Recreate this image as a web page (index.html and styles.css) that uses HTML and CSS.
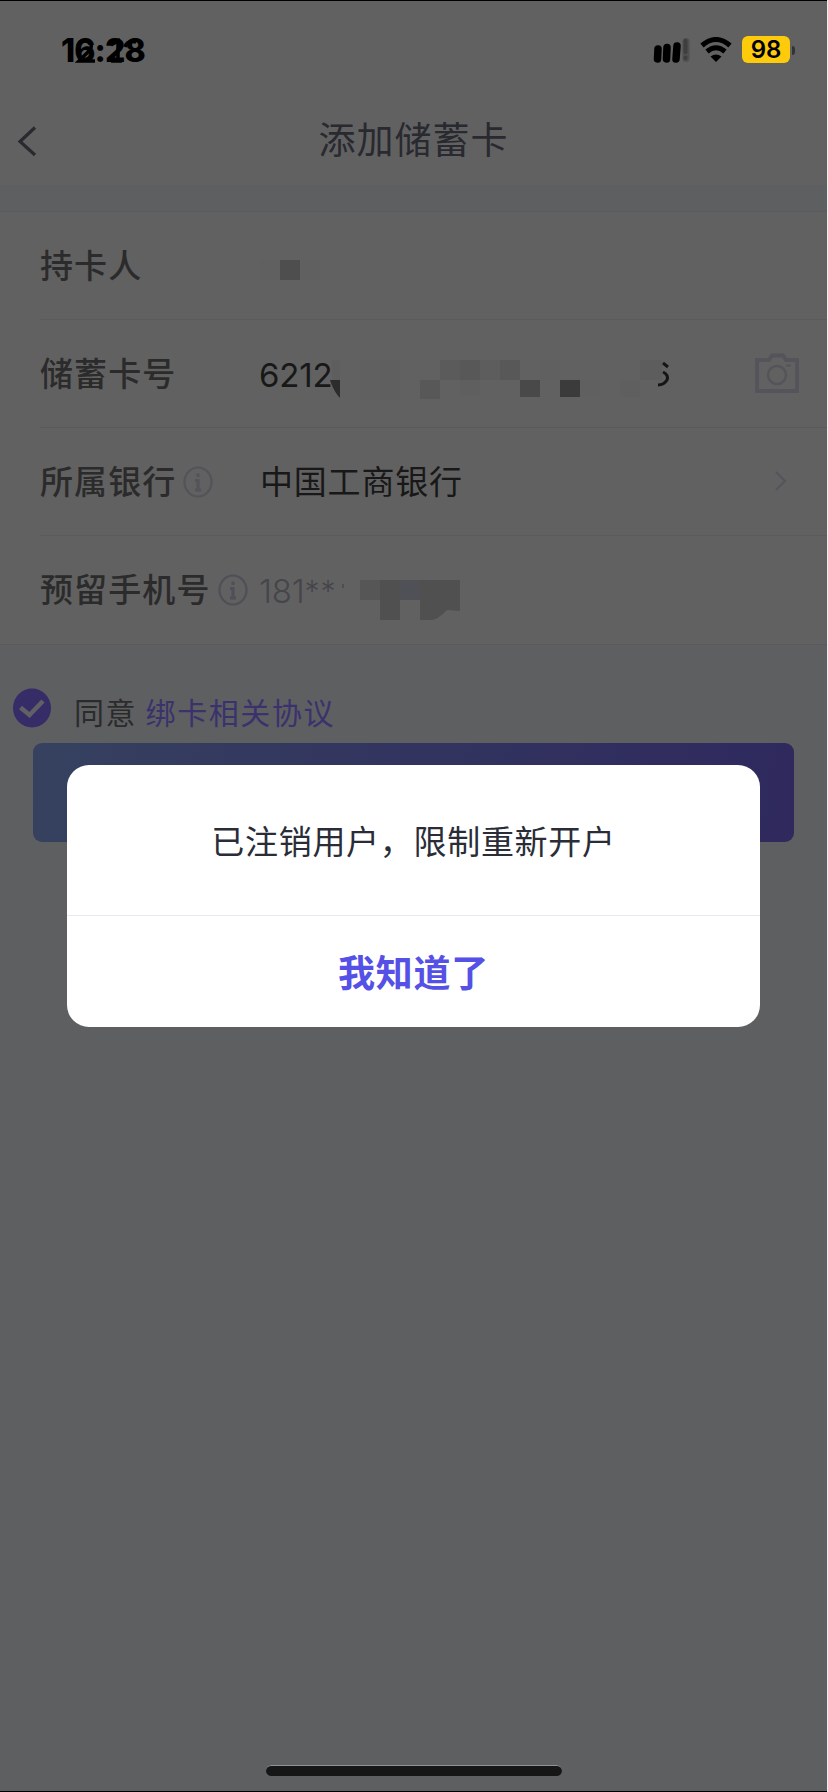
FILE: index.html
```html
<!DOCTYPE html>
<html lang="zh-CN">
<head>
<meta charset="utf-8">
<title>添加储蓄卡</title>
<link rel="stylesheet" href="styles.css">
</head>
<body>
<div class="screen">
  <div class="status">
    <div class="clock">16:28
      <svg class="clock-ghost" width="84" height="40" viewBox="0 0 84 40" fill="none" stroke="#000" stroke-width="3.500"><path d="M18 15Q19 9 26 10Q34 12 30 19L19 30H35"/><path d="M51 14L58 10V30M51 30H62"/><path d="M65 16Q67 9 76 11"/></svg>
    </div>
    <div class="indicators">
      <svg class="signal" width="38" height="28" viewBox="0 0 38 28">
        <path d="M5 13L4.500 23M14 11.500L13.500 23M24 10L23 23" stroke="#000" stroke-width="7.500" stroke-linecap="round"/>
        <path d="M33 5.500V22.500" stroke="#505050" stroke-width="7" stroke-linecap="round"/>
        <path d="M32.500 5V16M32.500 21.500V22" stroke="#3e3e3e" stroke-width="4" stroke-linecap="round"/>
      </svg>
      <svg class="wifi" width="34" height="26" viewBox="0 0 34 26">
        <path d="M3 8.500Q17-3.500 31 8.500M8 14.500Q17 7 26 14.500" fill="none" stroke="#000" stroke-width="5"/>
        <path d="M17 25L11.500 19.500Q17 15.500 22.500 19.500Z"/>
      </svg>
      <div class="battery">98</div>
      <div class="battery-cap"></div>
    </div>
  </div>
  <header class="nav">
    <svg class="back" width="20" height="32" viewBox="0 0 20 32"><path d="M18 2.500L3 16.500L18 30" fill="none" stroke="#292930" stroke-width="3.200"/></svg>
    <h1 class="title">添加储蓄卡</h1>
  </header>
  <main class="form">
    <div class="row">
      <span class="label">持卡人</span>
      <svg class="mask mask-name" width="60" height="20"><path fill="#606060" d="M0 0H60V20H0Z"/><path fill="#4e4e4e" d="M20 0H40V20H20Z"/></svg>
    </div>
    <div class="row">
      <span class="label">储蓄卡号</span>
      <span class="value number">6212</span>
      <svg class="mask mask-card" width="345" height="60" viewBox="330 350 345 60">
        <path fill="#5e5e5e" d="M332 360H340V380H332Z"/>
        <path fill="#2c2c2c" d="M330 380H340V398Q334 392 330 380Z"/>
        <path fill="#606060" d="M360 360H380V400H360ZM540 360H560V380H540ZM580 380H600V397H580Z"/>
        <path fill="#5f5f5f" d="M380 360H400V400H380ZM460 380H480V396H460ZM620 380H640V397H620Z"/>
        <path fill="#5b5b5b" d="M440 360H520V380H440Z"/>
        <path fill="#5d5d5d" d="M480 360H500V380H480ZM640 360H662V380H640Z"/>
        <path fill="#585858" d="M420 380H440V399H420ZM460 360H480V380H460ZM500 360H520V380H500Z"/>
        <path fill="#494949" d="M520 380H540V397H520Z"/>
        <path fill="#3b3b3b" d="M560 380H580V397H560Z"/>
        <path d="M663 363L668 367M663 372Q669 375 667 380Q664 385 658 385" fill="none" stroke="#151515" stroke-width="3"/>
      </svg>
      <svg class="camera" width="46" height="42" viewBox="0 0 46 42"><path d="M3 7H15L18 2.500H29L32 7H43V38H3Z" fill="none" stroke="#54555a" stroke-width="3.800"/><circle cx="23" cy="22" r="9" fill="none" stroke="#54555a" stroke-width="2.500"/><path d="M32 12.500H37" stroke="#54555a" stroke-width="2"/></svg>
    </div>
    <div class="row">
      <span class="label">所属银行</span>
      <svg class="info" width="30" height="32" viewBox="0 0 30 32"><ellipse cx="15" cy="16" rx="13.500" ry="14.500" fill="none" stroke="#53535a" stroke-width="2.200"/><path d="M15 7.500V11M12 14.500H15V23M12 24H18" fill="none" stroke="#53535a" stroke-width="3"/></svg>
      <span class="value">中国工商银行</span>
      <svg class="chevron" width="14" height="22" viewBox="0 0 14 22"><path d="M2 2L11 11L2 20" fill="none" stroke="#54555b" stroke-width="2"/></svg>
    </div>
    <div class="row">
      <span class="label">预留手机号</span>
      <svg class="info" width="30" height="32" viewBox="0 0 30 32"><ellipse cx="15" cy="16" rx="13.500" ry="14.500" fill="none" stroke="#4f4f57" stroke-width="2.200"/><path d="M15 7.500V11M12 14.500H15V23M12 24H18" fill="none" stroke="#4f4f57" stroke-width="3"/></svg>
      <span class="value number phone">181<span class="stars">**</span></span>
      <svg class="mask mask-phone" width="122" height="40" viewBox="-22 0 122 40"><path fill="#4e4e52" d="M-18 4H-16V8H-18Z"/><path fill="#565656" d="M0 0H20V20H0Z"/><path fill="#505050" d="M20 0H100V31L87 30Q78 40 70 40H60V20H40V40H20Z"/><path fill="#505156" d="M40 0H60V20H40Z"/></svg>
    </div>
  </main>
  <div class="agree">
    <svg class="check" width="38" height="40" viewBox="0 0 38 40"><ellipse cx="19" cy="20" rx="19" ry="19.500" fill="#352c68"/><path d="M7.500 19.500L16.500 27L30 13" fill="none" stroke="#606164" stroke-width="4.500"/></svg>
    <span class="agree-text">同意 <span class="link">绑卡相关协议</span></span>
  </div>
  <div class="submit"></div>
  <div class="dialog">
    <p class="message">已注销用户，限制重新开户</p>
    <div class="confirm">我知道了</div>
  </div>
  <div class="home"></div>
</div>
</body>
</html>
```
FILE: styles.css
```css
* { box-sizing: border-box; }
body { margin: 0; background: #eee; font-family: "Noto Sans CJK SC", sans-serif; }
.screen {
  position: relative;
  display: flex;
  flex-direction: column;
  width: 827px;
  height: 1792px;
  background: #5e5f61;
  border-top: 1px solid #000;
  border-bottom: 1px solid #000;
}
.status {
  display: flex;
  justify-content: space-between;
  height: 90px;
  padding: 30px 33px 0 61px;
  background: #616161;
}
.clock {
  position: relative;
  font: 800 32px/40px Inter, sans-serif;
  letter-spacing: -.9px;
  color: #000;
}
.clock-ghost { position: absolute; left: -1px; top: 0; }
.indicators { display: flex; align-items: flex-start; padding-top: 5px; }
.signal { margin-right: 8px; }
.wifi { margin: 1px 9px 0 0; }
.battery {
  width: 48px;
  height: 27px;
  border-radius: 6px;
  background: #fdcb0c;
  color: #000;
  font: 600 24px/28px Inter, sans-serif;
  text-align: center;
}
.battery-cap { width: 3px; height: 9px; margin: 10px -1px 0 2px; border-radius: 0 4px 4px 0; background: #333; }
.nav {
  display: flex;
  align-items: center;
  height: 94px;
  padding-left: 17px;
  background: #616161;
}
.back { margin-top: 6px; }
.title {
  flex: 1;
  margin: 0 37px 0 0;
  text-align: center;
  font-size: 37px;
  font-weight: 400;
  line-height: 50px;
  letter-spacing: 1px;
  color: #292930;
}
.form {
  margin-top: 26px;
  height: 434px;
  background: #616161;
  border-top: 1px solid #5a5b5f;
  border-bottom: 1px solid #5a5a5c;
}
.row {
  position: relative;
  display: flex;
  align-items: center;
  height: 108px;
  margin-left: 40px;
  border-bottom: 1px solid #5b5b5d;
}
.row:last-child { border-bottom: 0; }
.label { margin-top: -4px; font-size: 33px; font-weight: 500; letter-spacing: 1.100px; color: #2b2b2b; white-space: nowrap; }
.info { margin: 0 0 0 7px; }
.value { position: absolute; left: 220px; top: 28px; font-size: 33px; line-height: 48px; letter-spacing: .8px; color: #181818; }
.number { top: 31px; left: 219px; font-family: Inter, sans-serif; font-size: 33px; letter-spacing: -.2px; }
.phone { color: #45454b; font-weight: 300; top: 31px; }
.stars { font-size: 30px; letter-spacing: 1px; position: relative; top: -1px; }
.mask { position: absolute; }
.mask-name { left: 220px; top: 48px; }
.mask-card { left: 290px; top: 30px; }
.mask-phone { left: 298px; top: 44px; }
.camera { margin: 1px 27px 0 auto; }
.chevron { margin: -1px 39px 0 auto; }
.agree { display: flex; height: 98px; padding: 43px 0 0 13px; }
.agree-text { margin: -1px 0 0 23px; font-size: 30px; line-height: 48px; letter-spacing: 1.600px; color: #2b2b2c; white-space: nowrap; }
.link { color: #3a326d; }
.submit {
  height: 99px;
  margin: 0 33px 0 33px;
  border-radius: 9px;
  background: linear-gradient(100deg, #36415f, #32345f 48%, #2f295e);
}
.dialog {
  position: absolute;
  left: 67px;
  top: 764px;
  width: 693px;
  height: 262px;
  border-radius: 22px;
  background: #fff;
  text-align: center;
}
.message {
  margin: 0;
  height: 151px;
  border-bottom: 1px solid #e7e8f4;
  font-size: 33px;
  line-height: 150px;
  letter-spacing: .7px;
  color: #2a2d37;
}
.confirm { font-size: 37px; font-weight: 700; line-height: 111px; letter-spacing: .7px; color: #5550e6; }
.home {
  width: 296px;
  height: 11px;
  margin: auto auto 15px 266px;
  border-radius: 6px;
  border-top: 1px solid #929292;
  background: #161616;
}
```
